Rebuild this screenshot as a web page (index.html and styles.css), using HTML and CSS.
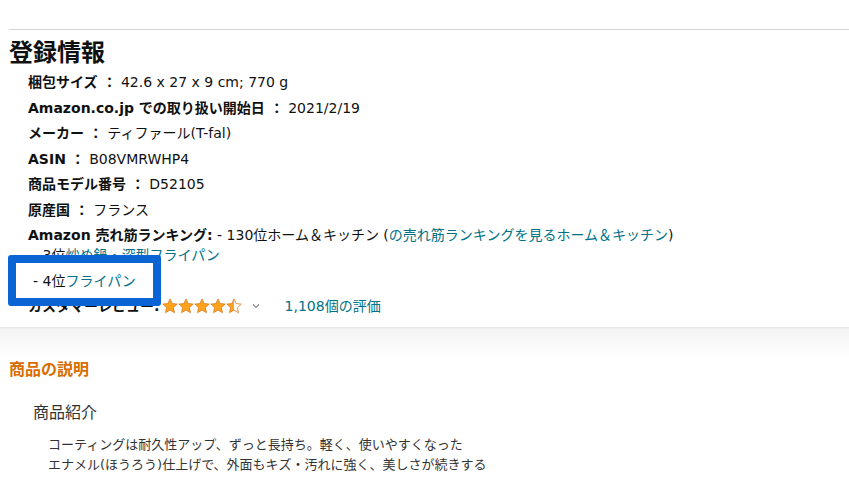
FILE: index.html
```html
<!DOCTYPE html>
<html lang="ja">
<head>
  <meta charset="UTF-8" />
  <meta name="viewport" content="width=device-width, initial-scale=1" />
  <title>登録情報</title>
  <link rel="stylesheet" href="styles.css">
</head>
<body>
  <div class="details">
    <hr class="top-rule" />
    <h2>登録情報</h2>
    <ul class="detail-list">
      <li><b>梱包サイズ ：</b> 42.6 x 27 x 9 cm; 770 g</li>
      <li><b>Amazon.co.jp での取り扱い開始日 ：</b> 2021/2/19</li>
      <li><b>メーカー ：</b> ティファール(T-fal)</li>
      <li><b>ASIN ：</b> B08VMRWHP4</li>
      <li><b>商品モデル番号 ：</b> D52105</li>
      <li><b>原産国 ：</b> フランス</li>
      <li>
        <b>Amazon 売れ筋ランキング:</b> - 130位ホーム＆キッチン (<a href="#">の売れ筋ランキングを見るホーム＆キッチン</a>)
        <ul class="rank-list">
          <li>- 3位<a href="#">炒め鍋・深型フライパン</a></li>
          <li class="highlight">- 4位<a href="#">フライパン</a></li>
        </ul>
      </li>
      <li class="review-row">
        <b>カスタマーレビュー:</b>
        <svg class="stars" width="80" height="16" viewBox="0 0 80 16">
          <defs>
            <linearGradient id="half">
              <stop offset="50%" stop-color="#ffa41c" />
              <stop offset="50%" stop-color="#fff" />
            </linearGradient>
            <polygon id="star" points="8,0.9 10.1,5.6 15.2,6.1 11.4,9.6 12.5,14.7 8,12.1 3.5,14.7 4.6,9.6 0.8,6.1 5.9,5.6" />
          </defs>
          <use href="#star" x="0" fill="#ffa41c" stroke="#de7921" stroke-width="0.8" />
          <use href="#star" x="16" fill="#ffa41c" stroke="#de7921" stroke-width="0.8" />
          <use href="#star" x="32" fill="#ffa41c" stroke="#de7921" stroke-width="0.8" />
          <use href="#star" x="48" fill="#ffa41c" stroke="#de7921" stroke-width="0.8" />
          <use href="#star" x="64" fill="url(#half)" stroke="#de7921" stroke-width="0.8" />
        </svg>
        <svg class="chevron" width="10" height="8" viewBox="0 0 10 8">
          <path d="M2 2.5 L5 5.5 L8 2.5" fill="none" stroke="#888" stroke-width="1.1" />
        </svg>
        <a class="rating-count" href="#">1,108個の評価</a>
      </li>
    </ul>
  </div>

  <div class="bucket-divider"></div>

  <div class="description">
    <h3>商品の説明</h3>
    <h4>商品紹介</h4>
    <p>コーティングは耐久性アップ、ずっと長持ち。軽く、使いやすくなった<br />
    エナメル(ほうろう)仕上げで、外面もキズ・汚れに強く、美しさが続きする</p>
  </div>
</body>
</html>
```

FILE: styles.css
```css
:root {
  --text: #0f1111;
  --muted-text: #333333;
  --link: #007185;
  --orange: #d96c00;
  --rule: #d5d5d5;
  --callout: #0a64d4;
}
body {
  margin: 0;
  background: #fff;
  color: var(--text);
  font-family: "DejaVu Sans", "Noto Sans CJK JP", sans-serif;
  font-size: 14px;
  line-height: 20px;
}
a {
  color: var(--link);
  text-decoration: none;
}
.details {
  padding: 29px 0 5px 9px;
}
.top-rule {
  margin: 0;
  border: none;
  border-top: 1px solid var(--rule);
}
h2 {
  margin: 7px 0 3px;
  font-size: 24px;
  line-height: 32px;
  font-weight: 700;
}
.detail-list {
  list-style: none;
  margin: 0;
  padding-left: 19px;
}
.detail-list li {
  margin-bottom: 5.5px;
}
.detail-list b {
  font-weight: 700;
}
.rank-list {
  list-style: none;
  margin: 0;
  padding-left: 5px;
}
.highlight {
  position: relative;
  z-index: 1;
}
/* blue callout drawn over the neighbouring rows */
.highlight::before {
  content: "";
  position: absolute;
  left: -25px;
  top: -16px;
  width: 153px;
  height: 51px;
  box-sizing: border-box;
  background: #fff;
  border: 8px solid var(--callout);
  border-radius: 3px;
  z-index: -1;
}
.review-row {
  display: flex;
  align-items: center;
}
.stars {
  margin-left: 2px;
}
.chevron {
  margin-left: 9px;
}
.rating-count {
  margin-left: 24px;
}
.bucket-divider {
  height: 32px;
  background: linear-gradient(to bottom, #e6e6e6 0, #f3f3f3 2px, #fafafa 18px, #fff 32px);
}
.description {
  padding-left: 9px;
}
h3 {
  margin: 0;
  font-size: 16px;
  line-height: 22px;
  font-weight: 700;
  color: var(--orange);
}
h4 {
  margin: 22px 0 0 24px;
  font-size: 16px;
  line-height: 20px;
  font-weight: 400;
  color: var(--muted-text);
}
.description p {
  margin: 12px 0 0 39px;
  font-size: 13px;
  line-height: 20px;
  color: var(--muted-text);
}
```
